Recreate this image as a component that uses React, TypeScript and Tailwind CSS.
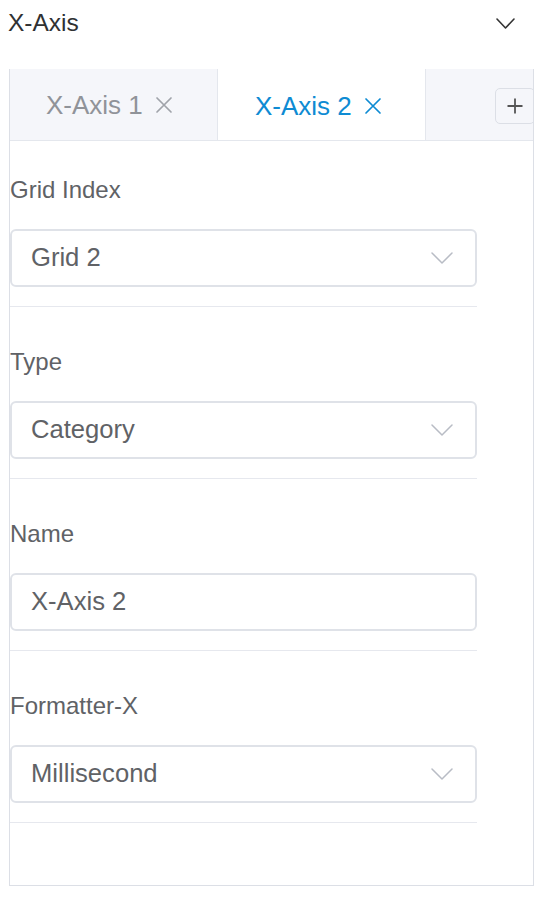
const font = { fontFamily: '"Liberation Sans", Arial, sans-serif' }

/** Thin chevron drawn to the reference's proportions */
function Chevron({ w, h, color, stroke }: { w: number; h: number; color: string; stroke: number }) {
  return (
    <svg width={w} height={h} viewBox={`0 0 ${w} ${h}`} fill="none" stroke={color} strokeWidth={stroke} strokeLinecap="round" strokeLinejoin="round">
      <path d={`M1 1 L${w / 2} ${h - 1} L${w - 1} 1`} />
    </svg>
  )
}

function Close({ color }: { color: string }) {
  return (
    <svg width="18" height="18" viewBox="0 0 18 18" fill="none" stroke={color} strokeWidth={1.7} strokeLinecap="round">
      <path d="M2 2 L16 16 M16 2 L2 16" />
    </svg>
  )
}

interface FieldProps {
  label: string
  value: string
  select?: boolean
  first?: boolean
}

/** One labelled form row with its divider */
function Field({ label, value, select = true, first = false }: FieldProps) {
  return (
    <div className={first ? 'pt-[31px]' : 'pt-[37px]'}>
      <div className="h-[36px] flex items-center text-[24px] text-[#606266] leading-none">{label}</div>
      <div className="mt-[21px] w-[467px] h-[58px] rounded-[6px] border-2 border-[#dfe2e8] bg-white flex items-center pl-[19px] pr-[22px]">
        <span className="flex-1 text-[25.6px] text-[#606266] leading-none">{value}</span>
        {select && <Chevron w={22} h={12} color="#b8bcc5" stroke={1.5} />}
      </div>
      <div className="mt-[19px] w-[467px] h-px bg-[#e6e8ee]" />
    </div>
  )
}

export default function App() {
  return (
    <div className="w-[552px] h-[897px] bg-white" style={font}>
      {/* collapse header */}
      <div className="h-[46px] flex items-center justify-between pl-[8px] pr-[37px]">
        <span className="text-[24.5px] text-[#303133] leading-none">X-Axis</span>
        <Chevron w={19} h={11} color="#333" stroke={1.6} />
      </div>

      <div className="mt-[23px] ml-[9px] w-[525px] border-x border-b border-[#dcdfe6] h-[817px]">
        {/* tabs */}
        <div className="flex h-[72px] bg-[#f5f6fa] border-b border-[#e4e7ed] overflow-hidden">
          <div className="w-[207px] shrink-0 flex items-center pl-[36px] text-[26px] text-[#909399] leading-none">
            <span>X-Axis 1</span>
            <span className="ml-[12px]">
              <Close color="#a0a3aa" />
            </span>
          </div>
          <div className="w-[209px] shrink-0 h-[73px] -mb-px bg-white border-x border-[#e4e7ed] flex items-center pl-[37px] text-[26px] text-[#0e8bd3] leading-none">
            <span>X-Axis 2</span>
            <span className="ml-[12px]">
              <Close color="#0e8bd3" />
            </span>
          </div>
          <div className="flex-1 flex items-center">
            <div className="ml-[69px] shrink-0 w-[40px] h-[36px] mt-[2px] rounded-[5px] border border-[#dcdfe6] bg-[#f5f6fa] flex items-center justify-center">
              <svg width="16" height="16" viewBox="0 0 16 16" fill="none" stroke="#555" strokeWidth={1.8}>
                <path d="M8 0.5 V15.5 M0.5 8 H15.5" />
              </svg>
            </div>
          </div>
        </div>

        {/* form */}
        <Field first label="Grid Index" value="Grid 2" />
        <Field label="Type" value="Category" />
        <Field label="Name" value="X-Axis 2" select={false} />
        <Field label="Formatter-X" value="Millisecond" />
      </div>
    </div>
  )
}
